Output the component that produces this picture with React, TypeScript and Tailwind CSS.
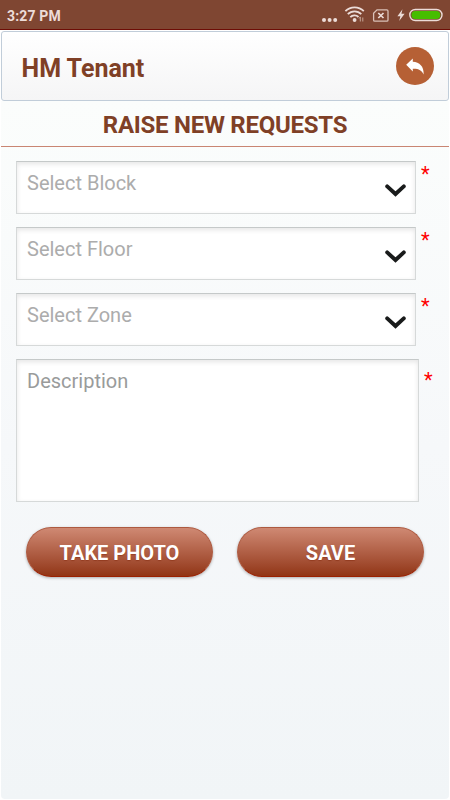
import React from "react";

function StatusBar() {
  return (
    <div className="flex h-[30px] items-center border-b border-[#6d0d06] bg-[#7f4632] pl-[7px] pr-[7px] text-[#ecdcd8]">
      <span className="pt-[3px] text-[14px] font-bold leading-none tracking-[0.15px]">3:27 PM</span>
      <svg className="ml-auto" width="126" height="29" viewBox="317 0 126 29" fill="none">
        <g fill="#ecdcd8">
          <circle cx="324" cy="20" r="2" />
          <circle cx="329.6" cy="20" r="2" />
          <circle cx="335.2" cy="20" r="2" />
          <circle cx="354.6" cy="20" r="1.9" />
          <path d="M402.5 9.3l-5.1 6.9h3l-1.2 4.8 5.4-7.2h-3.2z" />
        </g>
        <g stroke="#ecdcd8" strokeWidth="1.8">
          <path d="M350.3 17.2a5.6 5.6 0 0 1 8.2-.2" />
          <path d="M347.8 14.2a9.4 9.4 0 0 1 13.5 0" />
          <path d="M345.4 11.2a13.1 13.1 0 0 1 18.4 0" />
        </g>
        <path d="M360.3 17v4.5M362.8 17.5v4M359 18.5l1.3-1.6" stroke="#c5a598" strokeWidth="1" />
        <path d="M377 9.9h9.8a1.2 1.2 0 0 1 1.2 1.2v8.8a1.2 1.2 0 0 1-1.2 1.2h-12a1.2 1.2 0 0 1-1.2-1.2v-6.6z" stroke="#d9c0b7" strokeWidth="1.3" />
        <path d="M378.3 13l5.2 5m0-5l-5.2 5" stroke="#ecdcd8" strokeWidth="1.7" />
        <rect x="409.8" y="9.5" width="32.2" height="11" rx="5.5" stroke="#ecdcd8" strokeWidth="1.4" />
        <rect x="411.5" y="11.1" width="28.8" height="7.8" rx="3.9" fill="#46bd00" />
      </svg>
    </div>
  );
}

function Header() {
  return (
    <header className="mx-[1px] mt-[1px] flex h-[70px] items-center justify-between rounded-[3px] border border-[#c1cdd9] bg-linear-to-b from-white to-[#f5f5f6] pl-[19.5px] pr-[14px]">
      <h1 className="pt-[4px] text-[25px] font-bold leading-none text-[#7f4026]">HM Tenant</h1>
      <button className="flex size-[38px] items-center justify-center rounded-full bg-[#b66035]" aria-label="Back">
        <svg width="38" height="38" viewBox="0 0 38 38">
          <path d="M10.2 17.8L16.8 11.6v3.2c6.8.4 11 4.4 10.9 12.6-1.9-4-5-5.9-10.9-5.7v2.9z" fill="white" />
        </svg>
      </button>
    </header>
  );
}

const fieldClass =
  "border border-[#d6d9d9] border-t-[#c5c9c9] bg-white px-[10px] text-[20px] leading-[24px] shadow-[inset_0_2px_5px_rgba(0,0,0,0.10)]";

function Star() {
  return <span className="text-[20px] leading-[24px] text-[#ff0000]">*</span>;
}

function SelectField({ label }: { label: string }) {
  return (
    <div className="flex h-[53px] gap-[5px]">
      <button className={`${fieldClass} flex w-[400px] items-start justify-between pt-[9px] pr-[9px] text-[#acacac]`}>
        <span>{label}</span>
        <svg className="mt-[10px]" width="22" height="18" viewBox="0 0 22 18" fill="none">
          <path d="M3.2 5.4L11.5 13l8.3-7.6" stroke="#191b1b" strokeWidth="3.9" strokeLinecap="round" strokeLinejoin="miter" />
        </svg>
      </button>
      <div className="pt-[1px]"><Star /></div>
    </div>
  );
}

function ActionButton({ label }: { label: string }) {
  return (
    <button className="h-[50px] w-[187px] rounded-full border border-[#ad5a40] border-b-[#9b2000] bg-linear-to-b from-[#cf8973] to-[#913514] pt-[2px] text-[20px] font-bold leading-none text-white shadow-[0_1px_3px_rgba(0,0,0,0.3)] [text-shadow:0_1px_1px_rgba(120,30,0,0.4)]">
      {label}
    </button>
  );
}

export default function App() {
  return (
    <div className="h-[800px] w-[450px] overflow-hidden bg-white font-['Roboto','Liberation_Sans',sans-serif]">
      <StatusBar />
      <Header />
      <main className="mx-[1px] h-[698px] rounded-b-[4px] bg-linear-to-b from-[#fbfdfc] via-[#f6f8fa] to-[#f1f5f7]">
        <h2 className="h-[46px] border-b border-[#c98572] pt-[12px] text-center text-[24px] font-bold leading-[24px] tracking-[-0.26px] text-[#7f4026]">
          RAISE NEW REQUESTS
        </h2>
        <form className="flex flex-col gap-[13px] pl-[15px] pt-[14px]">
          <SelectField label="Select Block" />
          <SelectField label="Select Floor" />
          <SelectField label="Select Zone" />
          <div className="flex gap-[5px]">
            <div className={`${fieldClass} h-[143px] w-[403px] pt-[9px] text-[#999b9b]`}>Description</div>
            <div className="pt-[9px]"><Star /></div>
          </div>
        </form>
        <div className="flex gap-[24px] pl-[25px] pt-[25px]">
          <ActionButton label="TAKE PHOTO" />
          <ActionButton label="SAVE" />
        </div>
      </main>
    </div>
  );
}
